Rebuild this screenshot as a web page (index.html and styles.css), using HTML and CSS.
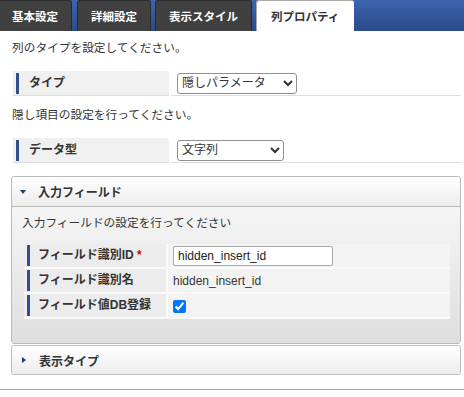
FILE: index.html
```html
<!DOCTYPE html>
<html lang="ja">
<head>
  <meta charset="UTF-8" />
  <title>列プロパティ</title>
  <link rel="stylesheet" href="styles.css">
</head>
<body>
  <div class="tabs">
    <a class="tab first">基本設定</a>
    <a class="tab">詳細設定</a>
    <a class="tab">表示スタイル</a>
    <a class="tab active">列プロパティ</a>
  </div>

  <div class="content">
    <p class="note">列のタイプを設定してください。</p>
    <table class="props">
      <tr>
        <th><span>タイプ</span></th>
        <td><select class="sel-type"><option>隠しパラメータ</option></select></td>
      </tr>
    </table>

    <p class="note">隠し項目の設定を行ってください。</p>
    <table class="props">
      <tr>
        <th><span>データ型</span></th>
        <td><select class="sel-data"><option>文字列</option></select></td>
      </tr>
    </table>

    <div class="panel">
      <div class="panel-head"><i class="arrow down"></i>入力フィールド</div>
      <div class="panel-body">
        <p>入力フィールドの設定を行ってください</p>
        <table class="props inner">
          <tr>
            <th><span>フィールド識別ID <em>*</em></span></th>
            <td><input type="text" value="hidden_insert_id"></td>
          </tr>
          <tr>
            <th><span>フィールド識別名</span></th>
            <td>hidden_insert_id</td>
          </tr>
          <tr>
            <th><span>フィールド値DB登録</span></th>
            <td><input type="checkbox" checked></td>
          </tr>
        </table>
      </div>
    </div>

    <div class="panel closed">
      <div class="panel-head"><i class="arrow right"></i>表示タイプ</div>
    </div>
  </div>

  <hr class="bottom-line">
</body>
</html>
```

FILE: styles.css
```css
body {
  margin: 0;
  font-family: "Liberation Sans", "Noto Sans CJK JP", sans-serif;
  font-size: 12px;
  color: #333;
  background: #fff;
}

/* tab bar */
.tabs {
  display: flex;
  height: 31px;
  background: linear-gradient(#3d64ae, #2b4b8b);
}
.tab {
  display: flex;
  align-items: center;
  padding: 0 13px;
  margin-right: 4px;
  background: #404040;
  border: 1px solid #2a2a2a;
  border-bottom: none;
  border-radius: 3px 3px 0 0;
  color: #fff;
  font-size: 11.5px;
  font-weight: bold;
}
.tab.first {
  padding-left: 12px;
  border-left: none;
  border-top-left-radius: 0;
  margin-right: 5px;
}
.tab.active {
  background: #fff;
  color: #333;
  border-color: #aaa #fff #fff #aaa;
  padding: 0 14px;
}

.content {
  padding: 0 3px 0 11px;
}
.note {
  margin: 8px 0 14px 1px;
  line-height: 18px;
  font-size: 11.7px;
}
.props + .note { margin-top: 10px; }

/* property rows */
.props {
  border-collapse: collapse;
  width: calc(100% - 2px);
  margin-left: 2px;
}
.props th {
  width: 153px;
  padding: 2px 0 1px 3px;
  text-align: left;
  background: #f0f0f0;
  border-right: 2px solid #fff;
  border-bottom: 1px solid #ddd;
}
.props th span {
  display: block;
  border-left: 3px solid #2f4f8f;
  padding-left: 10px;
  line-height: 21px;
}
.props td {
  padding: 0 0 0 6px;
  border-bottom: 1px solid #ddd;
}
.props select {
  height: 21px;
  font-family: inherit;
  font-size: 12px;
  color: #333;
  border: 1px solid #8f8f8f;
  border-radius: 3px;
  background: #fff;
}
.sel-type { width: 120px; }
.sel-data { width: 107px; }

/* collapsible panels */
.panel {
  margin-top: 13px;
  border: 1px solid #bbb;
  border-radius: 3px;
}
.panel.closed { margin-top: 1px; }
.panel-head {
  display: flex;
  align-items: center;
  height: 29px;
  padding-left: 8px;
  font-weight: bold;
  background: linear-gradient(#fff, #ececec);
  border-radius: 3px 3px 0 0;
}
.closed .panel-head { height: 28px; border-radius: 3px; }
.arrow {
  width: 0;
  height: 0;
  margin-right: 12px;
}
.arrow.down {
  border-left: 3px solid transparent;
  border-right: 3px solid transparent;
  border-top: 4px solid #1d3b6a;
}
.arrow.right {
  margin-left: 2px;
  margin-right: 13px;
  border-top: 3px solid transparent;
  border-bottom: 3px solid transparent;
  border-left: 4px solid #1d3b6a;
}
.panel-body {
  border-top: 1px solid #bbb;
  padding: 7px 10px 24px 10px;
  background: linear-gradient(#f5f5f5, #dedede);
}
.panel-body p {
  margin: 0 0 12px;
  line-height: 18px;
  font-size: 11.7px;
}

.inner th {
  width: 139px;
  background: #ececec;
  border-bottom: 2px solid #fafafa;
  border-right: 2px solid #fafafa;
  padding: 1px 0 1px 3px;
}
.inner th span {
  padding-left: 8px;
}
.inner td {
  padding-left: 5px;
  background: #f3f3f3;
  border-bottom: 2px solid #fafafa;
}
.inner em {
  font-style: normal;
  color: #d00;
}
.inner input[type="text"] {
  width: 150px;
  height: 18px;
  padding: 0 4px;
  border: 1px solid #aaa;
  border-radius: 2px;
  font-family: "Liberation Sans", sans-serif;
  font-size: 12px;
  color: #222;
  display: block;
}
.inner input[type="checkbox"] {
  margin: 2px 0 0;
  width: 13px;
  height: 13px;
  display: block;
}

.bottom-line {
  margin: 14px 0 0;
  border: none;
  border-top: 1px solid #aaa;
}
```
